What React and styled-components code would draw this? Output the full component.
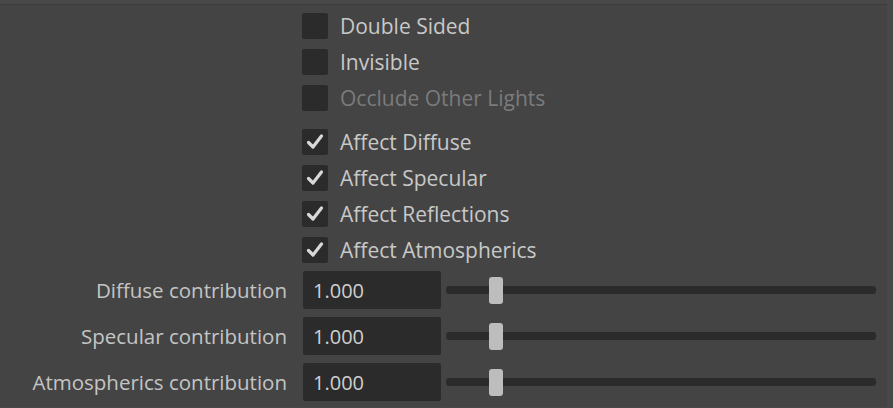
import React from 'react';
import styled, { createGlobalStyle } from 'styled-components';

const GlobalStyle = createGlobalStyle`
  html, body {
    margin: 0;
    padding: 0;
    background: #484848;
  }
  body {
    font-family: "Open Sans", "Noto Sans", sans-serif;
  }
`;

const Frame = styled.div`
  width: 893px;
  height: 408px;
  background: #484848;
  overflow: hidden;
  box-sizing: border-box;
  padding: 0 6px 5px 0;
`;

const Panel = styled.div`
  height: 100%;
  background: #444444;
  border-top: 1px solid #3c3c3c;
  margin-top: 4px;
  box-sizing: border-box;
  display: flex;
  flex-direction: column;
  padding-top: 8px;
`;

const CheckGroup = styled.div`
  display: flex;
  flex-direction: column;
  gap: 10px;
  padding-left: 302px;
  margin-bottom: ${p => p.$gap || 0}px;
`;

const CheckRow = styled.label`
  display: flex;
  align-items: center;
  gap: 12px;
  height: 26px;
  font-size: 21px;
  color: ${p => (p.$disabled ? '#7b7b7b' : '#c8c8c8')};
`;

const Box = styled.span`
  width: 26px;
  height: 26px;
  border-radius: 2px;
  background: #2b2b2b;
  display: flex;
  align-items: center;
  justify-content: center;
  flex-shrink: 0;
`;

const SliderGroup = styled.div`
  display: flex;
  flex-direction: column;
  gap: 8px;
  margin-top: 8px;
`;

const SliderRow = styled.div`
  display: grid;
  grid-template-columns: 288px 138px 1fr;
  column-gap: 5px;
  align-items: center;
  height: 38px;
  padding-right: 11px;
`;

const FieldLabel = styled.span`
  text-align: right;
  font-size: 20.5px;
  color: #c4c4c4;
  padding-right: 1px;
`;

const NumberField = styled.div`
  height: 38px;
  background: #2b2b2b;
  border-radius: 2px;
  display: flex;
  align-items: center;
  padding-left: 10px;
  font-size: 20px;
  color: #cfcfcf;
  box-sizing: border-box;
  margin-left: 10px;
  width: 138px;
`;

const Track = styled.div`
  position: relative;
  height: 8px;
  background: #2b2b2b;
  border-radius: 3px;
  margin-left: 10px;
`;

const Handle = styled.div`
  position: absolute;
  top: -9px;
  width: 14px;
  height: 27px;
  border-radius: 3px;
  background: #bdbdbd;
`;

const Check = () => (
  <svg width="20" height="20" viewBox="0 0 20 20">
    <path d="M3.5 10.5 L8 15 L16.5 4" fill="none" stroke="#d8d8d8" strokeWidth="3.2" strokeLinecap="round" strokeLinejoin="round" />
  </svg>
);

const CheckItem = ({ label, checked, disabled }) => (
  <CheckRow $disabled={disabled}>
    <Box>{checked && <Check />}</Box>
    {label}
  </CheckRow>
);

const sliders = [
  { label: 'Diffuse contribution', value: 1 },
  { label: 'Specular contribution', value: 1 },
  { label: 'Atmospherics contribution', value: 1 },
];

export default function App() {
  return (
    <Frame>
      <GlobalStyle />
      <Panel>
        <CheckGroup $gap={18}>
          <CheckItem label="Double Sided" />
          <CheckItem label="Invisible" />
          <CheckItem label="Occlude Other Lights" disabled />
        </CheckGroup>
        <CheckGroup>
          <CheckItem label="Affect Diffuse" checked />
          <CheckItem label="Affect Specular" checked />
          <CheckItem label="Affect Reflections" checked />
          <CheckItem label="Affect Atmospherics" checked />
        </CheckGroup>
        <SliderGroup>
          {sliders.map(s => (
            <SliderRow key={s.label}>
              <FieldLabel>{s.label}</FieldLabel>
              <NumberField>{s.value.toFixed(3)}</NumberField>
              <Track>
                <Handle style={{ left: `${43 + (s.value - 1) * 100}px` }} />
              </Track>
            </SliderRow>
          ))}
        </SliderGroup>
      </Panel>
    </Frame>
  );
}
